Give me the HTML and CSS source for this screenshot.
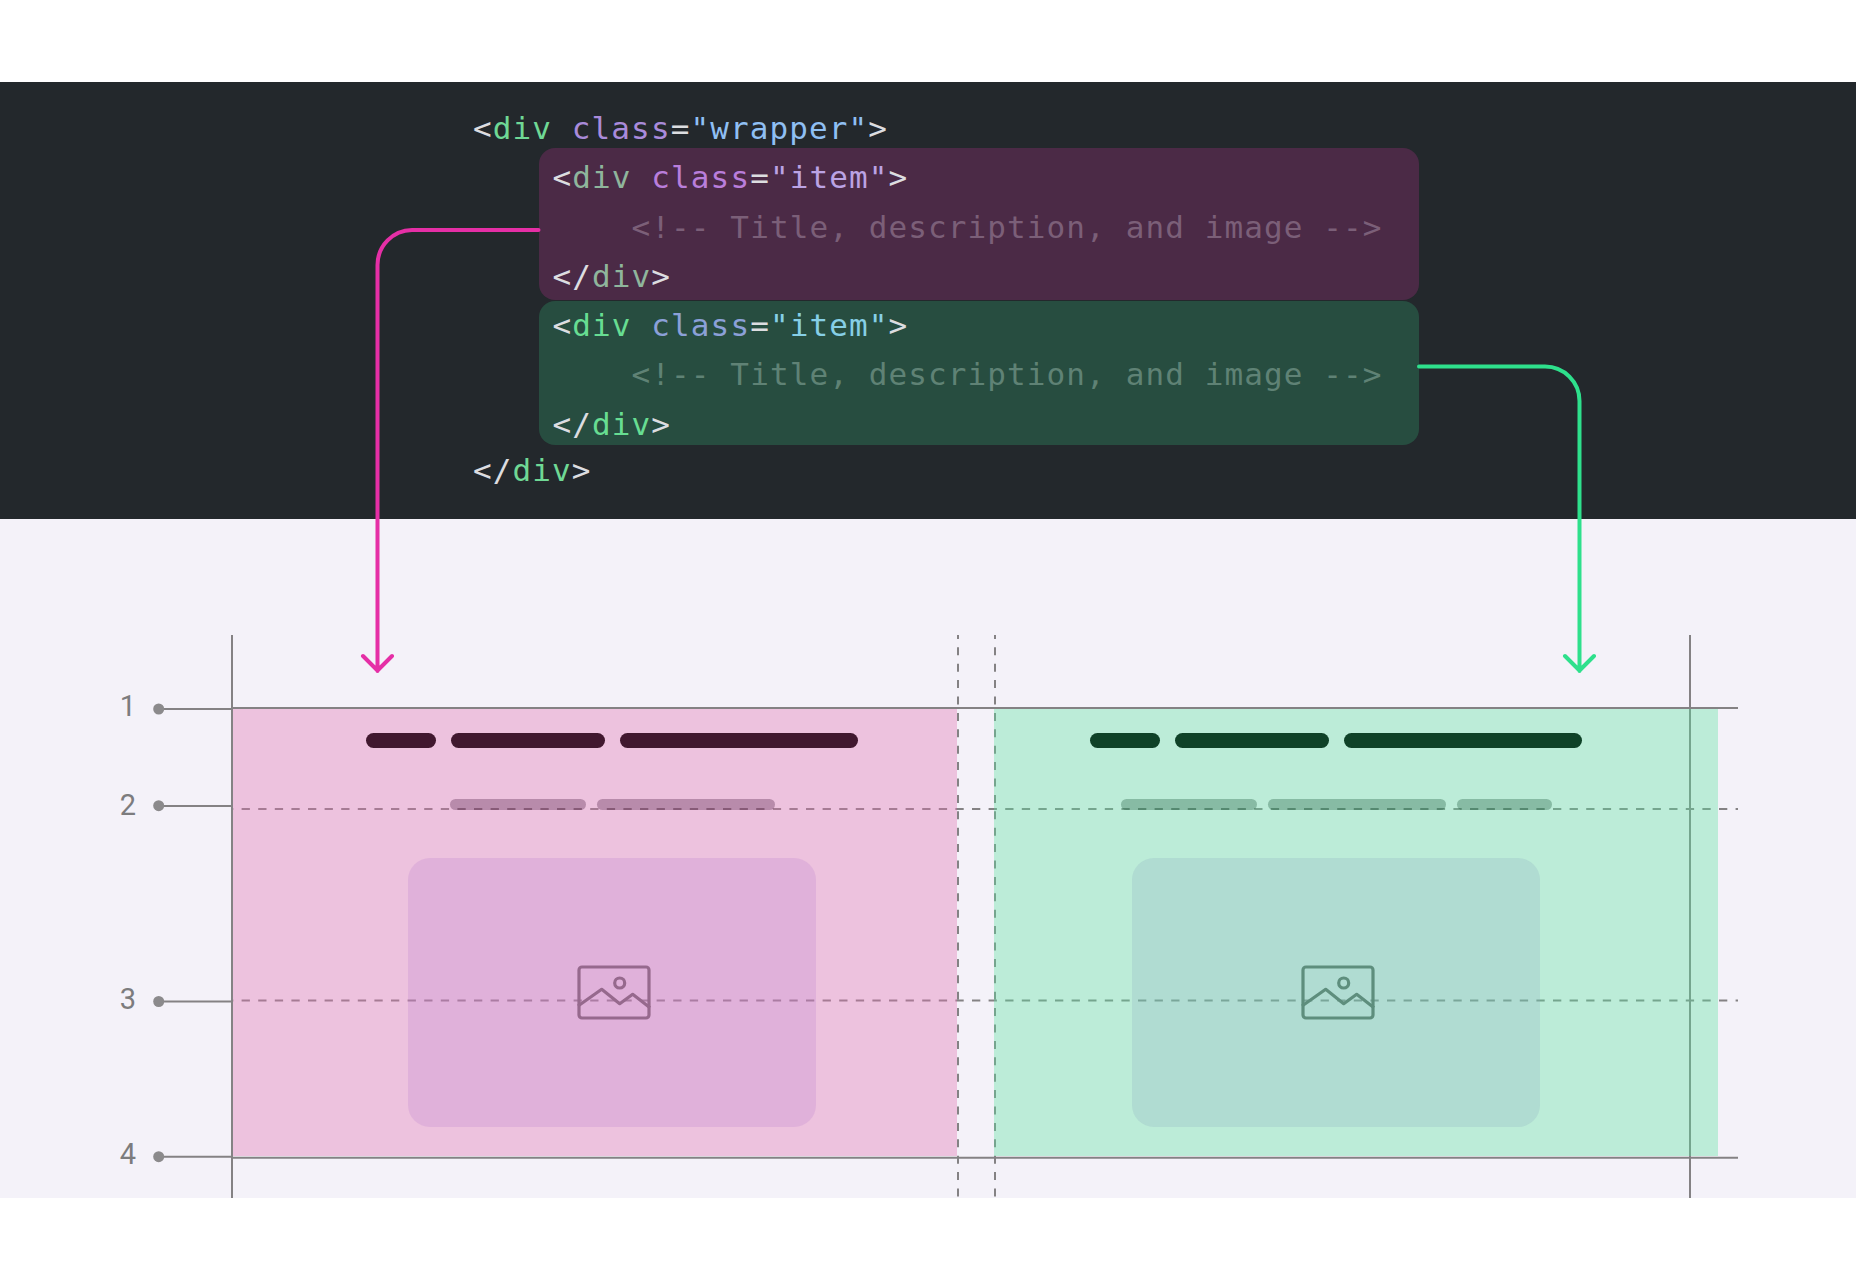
FILE: index.html
```html
<!DOCTYPE html>
<html lang="en">
<head>
<meta charset="utf-8">
<title>Grid items</title>
<link rel="stylesheet" href="styles.css">
</head>
<body>
<div class="page">
  <section class="code">
    <div class="line"><span class="p">&lt;</span><span class="tag">div</span> <span class="attr">class</span><span class="p">=</span><span class="val">"wrapper"</span><span class="p">&gt;</span></div>
    <div class="item item-pink">
      <div class="line"><span class="p">&lt;</span><span class="tag">div</span> <span class="attr">class</span><span class="p">=</span><span class="val">"item"</span><span class="p">&gt;</span></div>
      <div class="line comment">    &lt;!-- Title, description, and image --&gt;</div>
      <div class="line"><span class="p">&lt;/</span><span class="tag">div</span><span class="p">&gt;</span></div>
    </div>
    <div class="item item-green">
      <div class="line"><span class="p">&lt;</span><span class="tag">div</span> <span class="attr">class</span><span class="p">=</span><span class="val">"item"</span><span class="p">&gt;</span></div>
      <div class="line comment">    &lt;!-- Title, description, and image --&gt;</div>
      <div class="line"><span class="p">&lt;/</span><span class="tag">div</span><span class="p">&gt;</span></div>
    </div>
    <div class="line"><span class="p">&lt;/</span><span class="tag">div</span><span class="p">&gt;</span></div>
  </section>

  <section class="figure">
    <svg class="guides" viewBox="0 519 1856 679" width="1856" height="679" aria-hidden="true">
      <g class="solid">
        <line x1="232" y1="635" x2="232" y2="1198"/>
        <line x1="1690" y1="635" x2="1690" y2="1198"/>
        <line x1="231" y1="708" x2="1738" y2="708"/>
        <line x1="231" y1="1157.7" x2="1738" y2="1157.7"/>
        <line x1="158" y1="709" x2="232" y2="709"/>
        <line x1="158" y1="806" x2="232" y2="806"/>
        <line x1="158" y1="1001.5" x2="232" y2="1001.5"/>
        <line x1="158" y1="1156.7" x2="232" y2="1156.7"/>
      </g>
      <g class="dash-v">
        <line x1="958" y1="635" x2="958" y2="1198"/>
        <line x1="995" y1="635" x2="995" y2="1198"/>
      </g>
      <g class="dash-h">
        <line x1="233" y1="809" x2="1738" y2="809"/>
        <line x1="233" y1="1000.5" x2="1738" y2="1000.5"/>
      </g>
      <g class="dots">
        <circle cx="158.7" cy="709" r="5.5"/>
        <circle cx="158.7" cy="805.7" r="5.5"/>
        <circle cx="158.7" cy="1001.5" r="5.5"/>
        <circle cx="158.7" cy="1156.7" r="5.5"/>
      </g>
    </svg>
    <span class="row-num row-1">1</span>
    <span class="row-num row-2">2</span>
    <span class="row-num row-3">3</span>
    <span class="row-num row-4">4</span>

    <div class="blocks">
      <article class="block block-pink">
        <div class="bars title">
          <i class="w70"></i><i class="w154"></i><i class="w238"></i>
        </div>
        <div class="bars desc">
          <i class="w136"></i><i class="w178"></i>
        </div>
        <div class="image">
          <svg class="icon" viewBox="0 0 74 55" width="74" height="55" aria-hidden="true">
            <rect x="2" y="2" width="70" height="51" rx="3"/>
            <circle cx="42.7" cy="18" r="5"/>
            <path d="M1 41 L24.7 24.3 L42.7 38.7 L55.7 29.3 L73 42.7"/>
          </svg>
        </div>
      </article>
      <article class="block block-green">
        <div class="bars title">
          <i class="w70"></i><i class="w154"></i><i class="w238"></i>
        </div>
        <div class="bars desc">
          <i class="w136"></i><i class="w178"></i><i class="w95"></i>
        </div>
        <div class="image">
          <svg class="icon" viewBox="0 0 74 55" width="74" height="55" aria-hidden="true">
            <rect x="2" y="2" width="70" height="51" rx="3"/>
            <circle cx="42.7" cy="18" r="5"/>
            <path d="M1 41 L24.7 24.3 L42.7 38.7 L55.7 29.3 L73 42.7"/>
          </svg>
        </div>
      </article>
    </div>
  </section>

  <svg class="arrows" viewBox="0 0 1856 1280" width="1856" height="1280" aria-hidden="true">
    <path class="arrow-pink" d="M538.5 230 H412 A35 35 0 0 0 377.5 265 V671 M363 656 L377.5 670.5 L392 656"/>
    <path class="arrow-green" d="M1419 366.5 H1545 A34.5 34.5 0 0 1 1579.5 401 V671 M1565 656 L1579.5 670.5 L1594 656"/>
  </svg>
</div>
</body>
</html>
```

FILE: styles.css
```css
* { box-sizing: border-box; }

html, body {
  margin: 0;
  background: #fff;
}

.page {
  position: relative;
  width: 1856px;
  height: 1280px;
  padding-top: 82px;
  overflow: hidden;
}

/* code band */
.code {
  height: 437px;
  padding: 21.7px 0 0 473px;
  background: #23282c;
  font-family: "DejaVu Sans Mono", monospace;
  font-size: 31px;
  letter-spacing: 1.1px;
  color: #dcdde0;
}

.line {
  height: 49.5px;
  line-height: 49.5px;
  white-space: pre;
}

.tag { color: #6fd895; }
.attr { color: #a98bdb; }
.val { color: #8fbff3; }
.p { color: #dcdde0; }

.item {
  width: 880px;
  margin-left: 65.5px;
  padding-left: 14px;
  border-radius: 16px;
}

.item-pink {
  height: 152.7px;
  margin-top: -5.7px;
  padding-top: 5.7px;
  background: #4b2a46;
}
.item-pink .tag { color: #8fb59c; }
.item-pink .attr { color: #b97edb; }
.item-pink .val { color: #bba3e4; }
.item-pink .comment { color: #7b5f78; }

.item-green {
  height: 144px;
  margin-top: 6.3px;
  margin-bottom: 1px;
  background: #274d40;
}
.item-green .line:first-child { margin-top: -5.5px; }
.item-green .tag { color: #67dd92; }
.item-green .attr { color: #8ba0d8; }
.item-green .val { color: #86cfe6; }
.item-green .comment { color: #5f8275; }

.item .line:first-child { position: relative; }

/* grid figure */
.figure {
  position: relative;
  height: 679px;
  padding-top: 190px;
  background: #f4f2f9;
}

.guides {
  position: absolute;
  left: 0;
  top: 0;
  fill: none;
}
.guides line {
  stroke: #848284;
  stroke-width: 2;
}
.dash-v line {
  stroke-dasharray: 8 8.4;
  stroke-dashoffset: 4.1;
}
.dash-h line {
  stroke-dasharray: 8.3 8.3;
  stroke-dashoffset: 8;
}
.dots circle {
  fill: #8b8a8c;
}

.row-num {
  position: absolute;
  left: 100px;
  width: 36px;
  text-align: right;
  font-family: Roboto, sans-serif;
  font-size: 29px;
  line-height: 34px;
  color: #7c7c7e;
}
.row-1 { top: 170px; }
.row-2 { top: 269px; }
.row-3 { top: 463px; }
.row-4 { top: 618px; }

.blocks {
  position: relative;
  display: flex;
  gap: 37px;
  height: 447px;
  margin-left: 233px;
}

.block {
  display: flex;
  flex-direction: column;
  align-items: center;
  width: 724px;
  padding-top: 24px;
}
.block-pink {
  padding-left: 175px;
  padding-right: 141px;
  background: rgba(225, 112, 176, 0.37);
}
.block-green {
  padding-left: 138px;
  padding-right: 178px;
  background: rgba(92, 225, 159, 0.37);
}

.bars {
  display: flex;
  flex: none;
}
.bars i { display: block; }

.title {
  gap: 15px;
  height: 15px;
}
.title i {
  border-radius: 7.5px;
}
.block-pink .title i { background: #41182f; }
.block-green .title i { background: #0f4228; }

.desc {
  gap: 11px;
  height: 11px;
  margin-top: 51px;
}
.desc i {
  border-radius: 5.5px;
}
.block-pink .desc i { background: rgba(64, 14, 54, 0.3); }
.block-green .desc i { background: rgba(14, 72, 44, 0.3); }

.w70 { width: 70px; }
.w95 { width: 95px; }
.w136 { width: 136px; }
.w154 { width: 154px; }
.w178 { width: 178px; }
.w238 { width: 238px; }

.image {
  display: flex;
  flex: none;
  align-items: center;
  justify-content: center;
  width: 408px;
  height: 269px;
  margin-top: 48px;
  padding-left: 4px;
  border-radius: 22px;
}
.block-pink .image { background: rgba(189, 126, 206, 0.25); }
.block-green .image { background: rgba(140, 172, 192, 0.25); }

.icon {
  fill: none;
  stroke-width: 3.2;
  stroke-linejoin: round;
}
.block-pink .icon { stroke: #96698d; }
.block-green .icon { stroke: #5e8e7d; }

/* connector arrows */
.arrows {
  position: absolute;
  left: 0;
  top: 0;
  fill: none;
  stroke-width: 4;
  stroke-linecap: round;
  stroke-linejoin: round;
  pointer-events: none;
}
.arrow-pink { stroke: #e52fa6; }
.arrow-green { stroke: #2ee08c; }
```
